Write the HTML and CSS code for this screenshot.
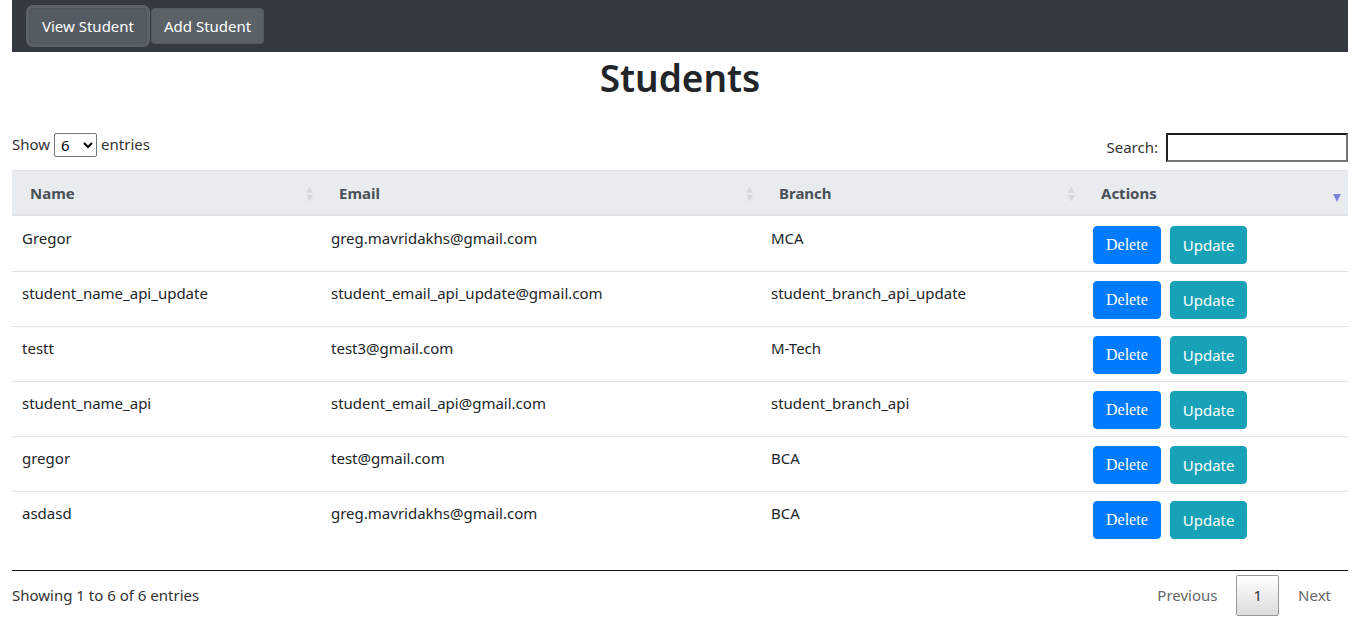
FILE: index.html
```html
<!DOCTYPE html>
<html>
<head>
<meta charset="utf-8">
<link rel="stylesheet" href="styles.css">
</head>
<body>
<div class="page">
  <nav class="topbar">
    <button class="nav-btn nav-btn--active">View Student</button>
    <button class="nav-btn">Add Student</button>
  </nav>
  <h1 class="title">Students</h1>
  <div class="controls">
    <label class="length">Show <select class="length-select"><option>6</option></select> entries</label>
    <label class="search">Search: <input class="search-input" type="text"></label>
  </div>
  <div class="table-wrap">
    <table class="grid">
      <colgroup>
        <col class="c1"><col class="c2"><col class="c3"><col class="c4">
      </colgroup>
      <thead>
        <tr>
          <th><div class="th-in"><span>Name</span><span class="sort"></span></div></th>
          <th><div class="th-in"><span>Email</span><span class="sort"></span></div></th>
          <th><div class="th-in"><span>Branch</span><span class="sort"></span></div></th>
          <th><div class="th-in"><span>Actions</span><span class="sort-desc"></span></div></th>
        </tr>
      </thead>
      <tbody>
        <tr><td>Gregor</td><td>greg.mavridakhs@gmail.com</td><td>MCA</td><td><div class="actions"><button class="btn-del">Delete</button><button class="btn-upd">Update</button></div></td></tr>
        <tr><td>student_name_api_update</td><td>student_email_api_update@gmail.com</td><td>student_branch_api_update</td><td><div class="actions"><button class="btn-del">Delete</button><button class="btn-upd">Update</button></div></td></tr>
        <tr><td>testt</td><td>test3@gmail.com</td><td>M-Tech</td><td><div class="actions"><button class="btn-del">Delete</button><button class="btn-upd">Update</button></div></td></tr>
        <tr><td>student_name_api</td><td>student_email_api@gmail.com</td><td>student_branch_api</td><td><div class="actions"><button class="btn-del">Delete</button><button class="btn-upd">Update</button></div></td></tr>
        <tr><td>gregor</td><td>test@gmail.com</td><td>BCA</td><td><div class="actions"><button class="btn-del">Delete</button><button class="btn-upd">Update</button></div></td></tr>
        <tr><td>asdasd</td><td>greg.mavridakhs@gmail.com</td><td>BCA</td><td><div class="actions"><button class="btn-del">Delete</button><button class="btn-upd">Update</button></div></td></tr>
      </tbody>
    </table>
  </div>
  <div class="footer">
    <div class="info">Showing 1 to 6 of 6 entries</div>
    <div class="paginate">
      <span class="pg-btn pg-disabled">Previous</span>
      <span class="pg-btn pg-current">1</span>
      <span class="pg-btn pg-disabled">Next</span>
    </div>
  </div>
</div>
</body>
</html>
```

FILE: styles.css
```css
* { box-sizing: border-box; }
body {
  margin: 0;
  font-family: "Segoe UI", "Noto Sans", "Open Sans", sans-serif;
  font-size: 15px;
  line-height: 1.5;
  color: #212529;
  background: #fff;
}
.page { padding: 0 12px; }

.topbar {
  height: 52px;
  background: #343a40;
  display: flex;
  align-items: center;
  gap: 4px;
  padding: 0 0 0 17px;
}
.nav-btn {
  height: 36px;
  padding: 0 12px;
  font-family: inherit;
  font-size: 15px;
  color: #fff;
  background: #5a6268;
  border: 1px solid #545b62;
  border-radius: 4px;
}
.nav-btn--active {
  background: #545b62;
  border-color: #4e555b;
  box-shadow: 0 0 0 3px rgba(130, 138, 145, 0.5);
}

.title {
  margin: 2px 0 0;
  text-align: center;
  font-size: 37px;
  line-height: 48px;
  font-weight: 600;
  color: #212529;
}

.controls {
  margin-top: 30px;
  height: 29px;
  display: flex;
  justify-content: space-between;
  align-items: center;
  color: #333;
}
.length { display: flex; align-items: center; gap: 4px; padding-bottom: 4px; }
.length-select {
  width: 43px;
  height: 24px;
  font-family: inherit;
  font-size: 15px;
  border: 1px solid #767676;
  border-radius: 2px;
  background: #fff;
  color: #000;
  padding: 0 0 0 2px;
}
.search { display: flex; align-items: center; gap: 8px; padding-top: 2px; }
.search-input {
  width: 182px;
  height: 29px;
  border: 2px solid;
  border-color: #1e1e1e #767676 #767676 #1e1e1e;
  background: #fff;
}

.table-wrap {
  margin-top: 9px;
  padding-bottom: 24px;
  border-bottom: 1px solid #111;
}
.grid {
  width: 100%;
  border-collapse: collapse;
  table-layout: fixed;
}
.c1 { width: 309px; }
.c2 { width: 440px; }
.c3 { width: 322px; }
.c4 { width: 265px; }

.grid th {
  background: #e9ecef;
  color: #495057;
  font-weight: 700;
  text-align: left;
  border-top: 1px solid #dee2e6;
  border-bottom: 2px solid #dee2e6;
  padding: 10px 8px 9px 18px;
  line-height: 24px;
}
.th-in {
  display: flex;
  justify-content: space-between;
  align-items: center;
}
.sort {
  width: 7px;
  height: 14px;
  display: flex;
  flex-direction: column;
  justify-content: space-between;
  margin-top: 2px;
}
.sort::before, .sort::after {
  content: "";
  border-left: 3.5px solid transparent;
  border-right: 3.5px solid transparent;
}
.sort::before { border-bottom: 6px solid #d7d9db; }
.sort::after { border-top: 6px solid #d7d9db; }
.sort-desc {
  width: 8px;
  height: 0;
  border-left: 4px solid transparent;
  border-right: 4px solid transparent;
  border-top: 8px solid #7b82d9;
  margin-top: 10px;
  margin-right: -1px;
}

.grid td {
  padding: 9px 10px 7px;
  vertical-align: top;
  line-height: 24px;
  border-top: 1px solid #dee2e6;
  white-space: nowrap;
}
.grid tbody tr:first-child td { border-top: none; padding-top: 10px; }

.actions { display: flex; gap: 9px; }
.btn-del {
  height: 38px;
  padding: 0 12px;
  background: #007bff;
  color: #fff;
  border: 1px solid #007bff;
  border-radius: 4px;
  font-family: "Liberation Serif", "Times New Roman", serif;
  font-size: 16px;
}
.btn-upd {
  height: 38px;
  padding: 0 12px;
  background: #17a2b8;
  color: #fff;
  border: 1px solid #17a2b8;
  border-radius: 4px;
  font-family: inherit;
  font-size: 15px;
}

.footer {
  display: flex;
  justify-content: space-between;
  align-items: center;
  padding-top: 4px;
  color: #333;
}
.paginate { display: flex; align-items: center; }
.pg-btn {
  padding: 8px 16px;
  margin-left: 2px;
  border: 1px solid transparent;
  border-radius: 2px;
  line-height: 23px;
}
.pg-disabled { color: #666; }
.pg-current {
  color: #333;
  border-color: #979797;
  background: linear-gradient(to bottom, #fff 0%, #dcdcdc 100%);
}
```
